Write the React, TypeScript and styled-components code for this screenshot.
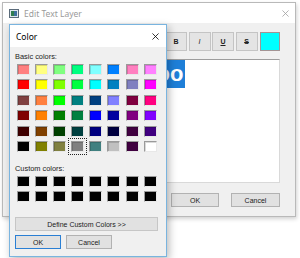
import styled, { createGlobalStyle } from "styled-components";

const GlobalStyle = createGlobalStyle`
  html, body {
    margin: 0;
    padding: 0;
    background: #ffffff;
  }
  * {
    box-sizing: border-box;
  }
`;

const basicColors = [
  ["#ff8080", "#ffff80", "#80ff80", "#00ff80", "#80ffff", "#0080ff", "#ff80c0", "#ff80ff"],
  ["#ff0000", "#ffff00", "#80ff00", "#00ff40", "#00ffff", "#0080c0", "#8080c0", "#ff00ff"],
  ["#804040", "#ff8040", "#00ff00", "#008080", "#004080", "#8080ff", "#800040", "#ff0080"],
  ["#800000", "#ff8000", "#008000", "#008040", "#0000ff", "#0000a0", "#800080", "#8000ff"],
  ["#400000", "#804000", "#004000", "#004040", "#000080", "#000040", "#400040", "#400080"],
  ["#000000", "#808000", "#808040", "#808080", "#408080", "#c0c0c0", "#400040", "#ffffff"],
];

const customColors = Array.from({ length: 16 }, () => "#000000");

function App() {
  return (
    <Desktop>
      <GlobalStyle />
      <EditWindow>
        <TitleBar>
          <AppIcon viewBox="0 0 10 9">
            <rect x="0.5" y="0.5" width="9" height="8" fill="#dfe7ee" stroke="#5a6b7a" />
            <rect x="2" y="2" width="3" height="5" fill="#2f7d4f" />
            <rect x="5" y="2" width="3" height="5" fill="#3c6f9c" />
          </AppIcon>
          <WindowTitle>Edit Text Layer</WindowTitle>
          <CloseGlyph viewBox="0 0 8 8" $color="#a0a0a0">
            <path d="M0.5 0.5 L7.5 7.5 M7.5 0.5 L0.5 7.5" />
          </CloseGlyph>
        </TitleBar>
        <EditBody>
          <Toolbar>
            <ToolButton $weight={700}>B</ToolButton>
            <ToolButton $italic>I</ToolButton>
            <ToolButton $weight={700} $deco="underline">U</ToolButton>
            <ToolButton $weight={700} $deco="line-through">S</ToolButton>
            <ColorWell />
          </Toolbar>
          <TextArea>
            <Selected>Foo</Selected>
          </TextArea>
          <ButtonRow>
            <DialogButton $w={48}>OK</DialogButton>
            <DialogButton $w={49}>Cancel</DialogButton>
          </ButtonRow>
        </EditBody>
      </EditWindow>

      <ColorDialog>
        <DialogTitleBar>
          <DialogTitle>Color</DialogTitle>
          <CloseGlyph viewBox="0 0 8 8" $color="#000000">
            <path d="M0.5 0.5 L7.5 7.5 M7.5 0.5 L0.5 7.5" />
          </CloseGlyph>
        </DialogTitleBar>
        <DialogBody>
          <Label>Basic colors:</Label>
          <SwatchGrid>
            {basicColors.flat().map((c, i) => (
              <Swatch key={i} $color={c} $selected={i === 43} />
            ))}
          </SwatchGrid>
          <Label $top={12}>Custom colors:</Label>
          <SwatchGrid>
            {customColors.map((c, i) => (
              <Swatch key={i} $color={c} />
            ))}
          </SwatchGrid>
          <WideButton>Define Custom Colors &gt;&gt;</WideButton>
          <DialogActions>
            <DialogButton $w={46} $default>OK</DialogButton>
            <DialogButton $w={46}>Cancel</DialogButton>
          </DialogActions>
        </DialogBody>
      </ColorDialog>
    </Desktop>
  );
}

const Desktop = styled.div`
  position: relative;
  width: 300px;
  height: 258px;
  background: #ffffff;
  overflow: hidden;
`;

const EditWindow = styled.div`
  position: absolute;
  left: 2px;
  top: 2px;
  width: 294px;
  height: 215px;
  border: 1px solid #b9b9b9;
  background: #f0f0f0;
  box-shadow: 1px 2px 4px rgba(0, 0, 0, 0.18);
  display: flex;
  flex-direction: column;
`;

const TitleBar = styled.div`
  height: 20px;
  background: #ffffff;
  display: flex;
  align-items: center;
  padding: 0 6px 0 6px;
`;

const AppIcon = styled.svg`
  width: 10px;
  height: 9px;
  margin-right: 5px;
`;

const WindowTitle = styled.span`
  flex: 1;
  font-family: "Noto Sans", sans-serif;
  font-size: 8.5px;
  color: #9a9a9a;
`;

const CloseGlyph = styled.svg<{ $color: string }>`
  width: 7px;
  height: 7px;
  stroke: ${(p) => p.$color};
  stroke-width: 0.9;
  fill: none;
`;

const EditBody = styled.div`
  flex: 1;
  display: flex;
  flex-direction: column;
  padding: 9px 15px 0 18px;
`;

const Toolbar = styled.div`
  display: flex;
  justify-content: flex-end;
  gap: 1.5px;
  height: 19px;
`;

const ToolButton = styled.div<{ $weight?: number; $italic?: boolean; $deco?: string }>`
  width: 22px;
  height: 19px;
  border: 1px solid #c4c4c4;
  background: #e4e4e4;
  display: flex;
  align-items: center;
  justify-content: center;
  font-family: "Liberation Sans", sans-serif;
  font-size: 7px;
  color: #222;
  font-weight: ${(p) => p.$weight ?? 400};
  font-style: ${(p) => (p.$italic ? "italic" : "normal")};
  text-decoration: ${(p) => p.$deco ?? "none"};
`;

const ColorWell = styled.div`
  width: 20px;
  height: 19px;
  margin-left: 1px;
  background: #00ffff;
  border: 1px solid #a39393;
`;

const TextArea = styled.div`
  margin-top: 8px;
  height: 124px;
  background: #ffffff;
  border: 1px solid #d9d9d9;
  border-top-color: #9d9d9d;
  padding: 0 0 0 119px;
`;

const Selected = styled.span`
  display: inline-block;
  background: #1e7fd8;
  color: #ffffff;
  font-family: "Liberation Sans", sans-serif;
  font-size: 22px;
  font-weight: 700;
  line-height: 28px;
  padding: 0 2px;
`;

const ButtonRow = styled.div`
  display: flex;
  justify-content: flex-end;
  gap: 12px;
  margin-top: 10px;
`;

const DialogButton = styled.div<{ $w: number; $default?: boolean }>`
  width: ${(p) => p.$w}px;
  height: 14px;
  border: 1px solid ${(p) => (p.$default ? "#2a7fd4" : "#b2b2b2")};
  background: #e1e1e1;
  display: flex;
  align-items: center;
  justify-content: center;
  font-family: "Liberation Sans", sans-serif;
  font-size: 7px;
  color: #1a1a1a;
`;

const ColorDialog = styled.div`
  position: absolute;
  left: 9px;
  top: 24px;
  width: 158px;
  height: 233px;
  border: 1px solid #79b4df;
  background: #f0f0f0;
  box-shadow: 2px 3px 8px rgba(0, 0, 0, 0.28);
  display: flex;
  flex-direction: column;
`;

const DialogTitleBar = styled.div`
  height: 22px;
  background: #ffffff;
  display: flex;
  align-items: center;
  padding: 0 7px 0 6px;
`;

const DialogTitle = styled.span`
  flex: 1;
  font-family: "Noto Sans", sans-serif;
  font-size: 8.5px;
  color: #000000;
`;

const DialogBody = styled.div`
  flex: 1;
  display: flex;
  flex-direction: column;
  padding: 5px 8px 0 5px;
`;

const Label = styled.div<{ $top?: number }>`
  margin-top: ${(p) => p.$top ?? 0}px;
  font-family: "Liberation Sans", sans-serif;
  font-size: 7.4px;
  line-height: 9px;
  color: #222222;
  margin-bottom: 3px;
`;

const SwatchGrid = styled.div`
  display: grid;
  grid-template-columns: repeat(8, 13px);
  grid-auto-rows: 11px;
  column-gap: 5.1px;
  row-gap: 4.4px;
  padding-left: 2px;
`;

const Swatch = styled.div<{ $color: string; $selected?: boolean }>`
  background: ${(p) => p.$color};
  border: 1px solid;
  border-color: #9a9a9a #e8e8e8 #e8e8e8 #9a9a9a;
  box-shadow: inset 1px 1px 0 rgba(0, 0, 0, 0.15);
  outline: ${(p) => (p.$selected ? "1px dotted #222" : "none")};
  outline-offset: 2px;
`;

const WideButton = styled.div`
  margin-top: 15px;
  height: 14px;
  border: 1px solid #c6c6c6;
  background: #e1e1e1;
  display: flex;
  align-items: center;
  justify-content: center;
  font-family: "Liberation Sans", sans-serif;
  font-size: 7px;
  color: #1a1a1a;
`;

const DialogActions = styled.div`
  display: flex;
  gap: 5px;
  margin-top: 4px;
`;

export default App;
